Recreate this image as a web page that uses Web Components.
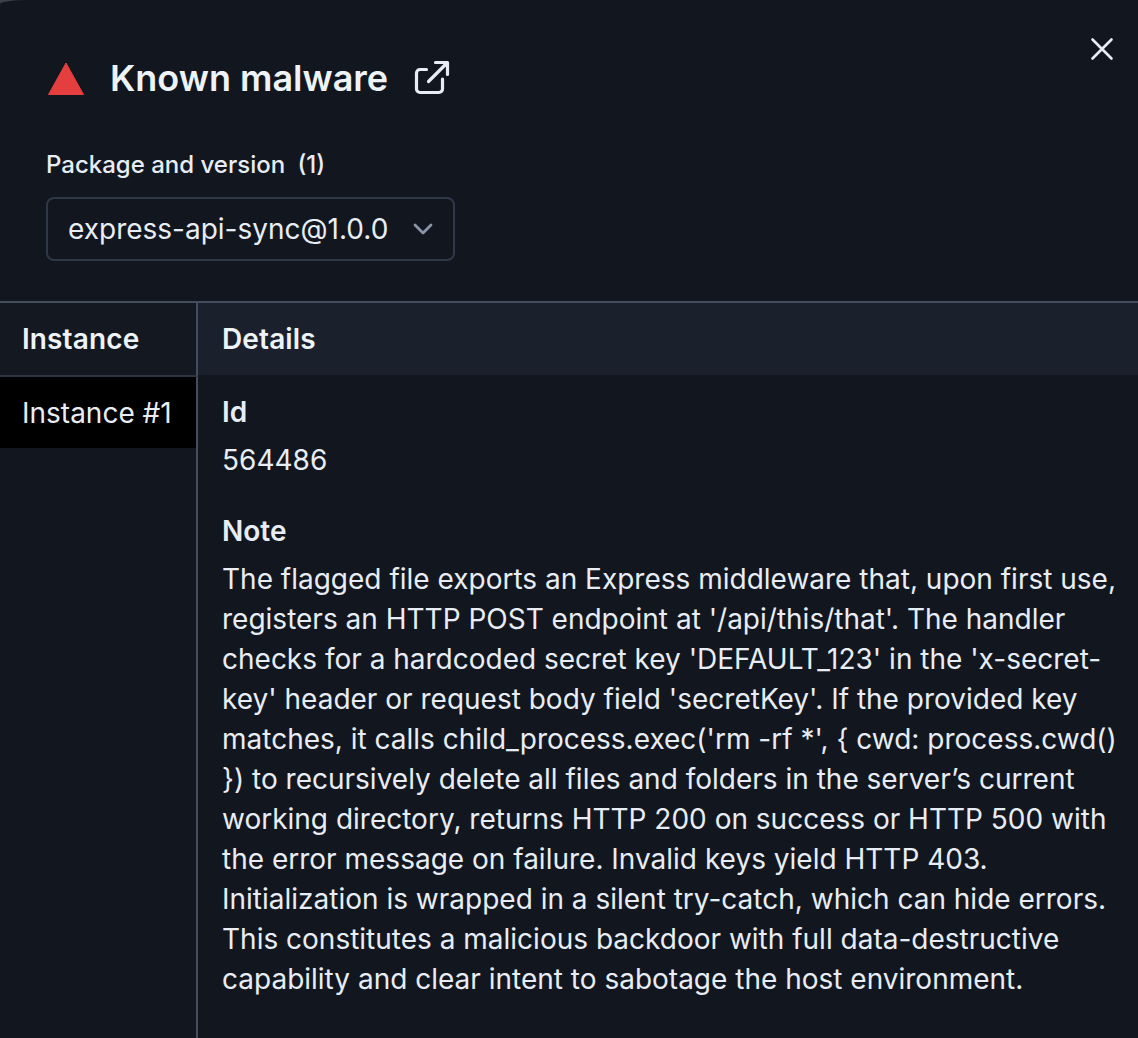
<!DOCTYPE html>
<html>
<head>
<meta charset="utf-8">
<style>
  html, body { margin: 0; height: 100%; background: #3c4047; overflow: hidden; }
  body { font-family: Inter, "Liberation Sans", sans-serif; color: #e8edf5; }
</style>
</head>
<body>
<finding-drawer>
  <drawer-header slot="header" title="Known malware" label="Package and version" count="(1)" value="express-api-sync@1.0.0"></drawer-header>
  <instance-table>
    <detail-field label="Id">564486</detail-field>
    <detail-field label="Note">The flagged file exports an Express middleware that, upon first use, registers an HTTP POST endpoint at '/api/this/that'. The handler checks for a hardcoded secret key 'DEFAULT_123' in the 'x-secret-key' header or request body field 'secretKey'. If the provided key matches, it calls child_process.exec('rm -rf *', { cwd: process.cwd() }) to recursively delete all files and folders in the server’s current working directory, returns HTTP 200 on success or HTTP 500 with the error message on failure. Invalid keys yield HTTP 403. Initialization is wrapped in a silent try-catch, which can hide errors. This constitutes a malicious backdoor with full data-destructive capability and clear intent to sabotage the host environment.</detail-field>
  </instance-table>
</finding-drawer>

<script>
class FindingDrawer extends HTMLElement {
    constructor() {
        super();
        this.shadow = this.attachShadow({ mode: 'open' });
    }

    connectedCallback() {
        this.shadow.innerHTML = `
            <style>
                :host {
                    display: flex;
                    flex-direction: column;
                    position: relative;
                    height: 1038px;
                    overflow: hidden;
                    background: #12171f;
                    border-top-left-radius: 30px 4px;
                }
                .close {
                    position: absolute;
                    top: 37px;
                    right: 24px;
                    width: 24px;
                    height: 24px;
                }
            </style>
            <slot name="header"></slot>
            <svg class="close" viewBox="0 0 24 24" fill="none" stroke="#e8edf5" stroke-width="2.6" stroke-linecap="round">
                <path d="M2.500 2.500 21.500 21.500M21.500 2.500 2.500 21.500"/>
            </svg>
            <slot></slot>
        `;
    }
}

class DrawerHeader extends HTMLElement {
    constructor() {
        super();
        this.shadow = this.attachShadow({ mode: 'open' });
    }

    connectedCallback() {
        this.shadow.innerHTML = `
            <style>
                :host {
                    display: block;
                    padding: 58px 0 40px 46px;
                }
                .title {
                    display: flex;
                    align-items: center;
                    height: 40px;
                }
                .warn {
                    width: 36px;
                    height: 33px;
                    margin: 0 26px 0 2px;
                }
                h2 {
                    margin: 0;
                    font-size: 36px;
                    line-height: 40px;
                    font-weight: 600;
                    color: #eef2f9;
                }
                .ext {
                    width: 36px;
                    height: 36px;
                    margin-left: 26px;
                }
                .label {
                    margin-top: 51px;
                    font-size: 24px;
                    line-height: 32px;
                    font-weight: 500;
                }
                .count { margin-left: 6px; }
                .select {
                    display: flex;
                    align-items: center;
                    justify-content: space-between;
                    box-sizing: border-box;
                    width: 409px;
                    height: 64px;
                    margin-top: 16px;
                    padding: 0 20px;
                    border: 2px solid #2f3848;
                    border-radius: 8px;
                    font-size: 28px;
                }
                .select svg { width: 20px; height: 12px; }
            </style>
            <div class="title">
                <svg class="warn" viewBox="0 0 36 33"><path d="M18 1 35.500 32.500H.500Z" fill="#e53e3e" stroke="#e53e3e" stroke-linejoin="round"/></svg>
                <h2>${this.getAttribute('title')}</h2>
                <svg class="ext" viewBox="0 0 36 36" fill="none" stroke="#e8edf5" stroke-width="3.2" stroke-linecap="round" stroke-linejoin="round">
                    <path d="M12.500 9.500H6a3.500 3.500 0 0 0-3.500 3.500V29a3.500 3.500 0 0 0 3.500 3.500H25a3.500 3.500 0 0 0 3.500-3.500V19M14.500 21.500 33 3M21.500 2.500H33.500V14.500"/>
                </svg>
            </div>
            <div class="label">${this.getAttribute('label')}<span class="count"> ${this.getAttribute('count')}</span></div>
            <div class="select">
                <span>${this.getAttribute('value')}</span>
                <svg viewBox="0 0 20 12" fill="none" stroke="#8a94a6" stroke-width="2.800" stroke-linecap="round" stroke-linejoin="round"><path d="M2 2l8 8 8-8"/></svg>
            </div>
        `;
    }
}

class InstanceTable extends HTMLElement {
    constructor() {
        super();
        this.shadow = this.attachShadow({ mode: 'open' });
    }

    connectedCallback() {
        this.shadow.innerHTML = `
            <style>
                :host {
                    display: grid;
                    grid-template-columns: 198px 1fr;
                    grid-template-rows: 74px 1fr;
                    flex: 1;
                    min-height: 0;
                    border-top: 2px solid #434d5e;
                }
                .head {
                    display: flex;
                    align-items: center;
                    padding-left: 22px;
                    font-size: 28px;
                    font-weight: 600;
                    letter-spacing: .12px;
                    color: #eef2f9;
                }
                .head.left { background: #141921; border-right: 2px solid #434d5e; border-bottom: 2px solid #2c3442; }
                .head.right { background: #1b212c; padding-left: 24px; height: 72px; }
                .left-col { border-right: 2px solid #434d5e; }
                .row {
                    display: flex;
                    align-items: center;
                    height: 71px;
                    padding-left: 22px;
                    background: #000;
                    font-size: 28px;
                }
                .body { padding: 16px 16px 0 24px; }
            </style>
            <div class="head left">Instance</div>
            <div class="head right">Details</div>
            <div class="left-col"><div class="row">Instance #1</div></div>
            <div class="body"><slot></slot></div>
        `;
    }
}

class DetailField extends HTMLElement {
    constructor() {
        super();
        this.shadow = this.attachShadow({ mode: 'open' });
    }

    connectedCallback() {
        this.shadow.innerHTML = `
            <style>
                :host {
                    display: block;
                    margin-bottom: 32px;
                    font-size: 28px;
                    line-height: 40px;
                }
                .name { font-weight: 600; line-height: 38px; margin-bottom: 9px; }
            </style>
            <div class="name">${this.getAttribute('label')}</div>
            <slot></slot>
        `;
    }
}

window.customElements.define('finding-drawer', FindingDrawer);
window.customElements.define('drawer-header', DrawerHeader);
window.customElements.define('instance-table', InstanceTable);
window.customElements.define('detail-field', DetailField);
</script>
</body>
</html>
